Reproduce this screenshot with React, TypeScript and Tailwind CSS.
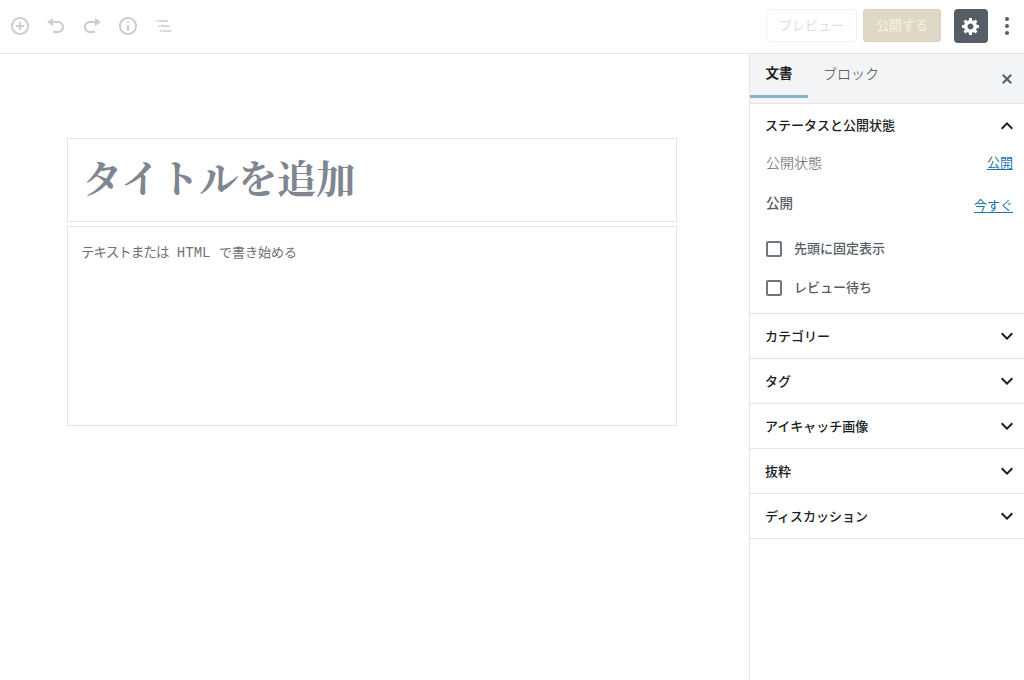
import type { ReactNode } from 'react'

const icons = {
  insert: 'M10 1c-5 0-9 4-9 9s4 9 9 9 9-4 9-9-4-9-9-9zm0 16c-3.9 0-7-3.1-7-7s3.1-7 7-7 7 3.1 7 7-3.1 7-7 7zm1-11H9v3H6v2h3v3h2v-3h3V9h-3V6z',
  undo: 'M12 5H7V2L1 6l6 4V7h5c2.2 0 4 1.8 4 4s-1.8 4-4 4H7v2h5c3.3 0 6-2.7 6-6s-2.7-6-6-6z',
  redo: 'M8 5h5V2l6 4-6 4V7H8c-2.2 0-4 1.8-4 4s1.8 4 4 4h5v2H8c-3.3 0-6-2.7-6-6s2.7-6 6-6z',
  info: 'M9 15h2V9H9v6zm1-10c-.5 0-1 .5-1 1s.5 1 1 1 1-.5 1-1-.5-1-1-1zm0-4c-5 0-9 4-9 9s4 9 9 9 9-4 9-9-4-9-9-9zm0 16c-3.9 0-7-3.1-7-7s3.1-7 7-7 7 3.1 7 7-3.1 7-7 7z',
  navigation: 'M5 5H3v2h2V5zm3 8h11v-2H8v2zm9-8H6v2h11V5zM7 11H5v2h2v-2zm0 8h2v-2H7v2zm3-2v2h11v-2H10z',
  settings: 'M18 12h-2.18c-.17.7-.44 1.35-.81 1.93l1.54 1.54-2.1 2.1-1.54-1.54c-.58.36-1.23.63-1.91.79V19H8v-2.18c-.68-.16-1.33-.43-1.91-.79l-1.54 1.54-2.12-2.12 1.54-1.54c-.36-.58-.63-1.23-.79-1.91H1V9.03h2.17c.16-.7.44-1.35.8-1.94L2.43 5.55l2.1-2.1 1.54 1.54c.58-.37 1.24-.64 1.93-.81V2h3v2.18c.68.16 1.33.43 1.91.79l1.54-1.54 2.12 2.12-1.54 1.54c.36.59.64 1.24.8 1.94H18V12zm-8.5 1.5c1.66 0 3-1.34 3-3s-1.34-3-3-3-3 1.34-3 3 1.34 3 3 3z',
  close: 'M14.95 6.46L11.41 10l3.54 3.54-1.41 1.41L10 11.42l-3.53 3.53-1.42-1.42L8.58 10 5.05 6.47l1.42-1.42L10 8.58l3.54-3.53z',
  down: 'M7.41 8.59L12 13.17l4.59-4.58L18 10l-6 6-6-6 1.41-1.41z',
  up: 'M12 8l-6 6 1.41 1.41L12 10.83l4.59 4.58L18 14z',
}

const panels = ['カテゴリー', 'タグ', 'アイキャッチ画像', '抜粋', 'ディスカッション']

function Icon({ name, box = 20, className = 'size-5' }: { name: keyof typeof icons; box?: number; className?: string }) {
  return (
    <svg viewBox={`0 0 ${box} ${box}`} fill="currentColor" className={`shrink-0 ${className}`} aria-hidden="true">
      <path d={icons[name]} />
    </svg>
  )
}

function Header() {
  return (
    <header className="flex h-[54px] shrink-0 items-center justify-between border-b border-[#e2e4e7] pb-0.5">
      <div className="flex gap-4 pl-2.5 text-[#cbcdcf]">
        <button aria-label="ブロックの追加"><Icon name="insert" /></button>
        <button aria-label="取り消し"><Icon name="undo" /></button>
        <button aria-label="やり直し"><Icon name="redo" /></button>
        <button aria-label="コンテンツ構造"><Icon name="info" /></button>
        <button aria-label="ブロックナビゲーション"><Icon name="navigation" box={24} /></button>
      </div>
      <div className="flex items-center pr-[7px] text-[13px]">
        <button className="h-[33px] w-[91px] rounded-[3px] border border-[#f3f3f4] pb-0.5 text-[#dddddf]">プレビュー</button>
        <button className="ml-1.5 h-[33px] w-[78px] rounded-[3px] border border-[#d9d1bc] bg-[#dfd8c6] pb-0.5 font-medium text-[#f5efdc]">公開する</button>
        <button aria-label="設定" className="ml-[13px] flex h-[34px] w-[34px] items-center justify-center rounded-[4px] bg-[#555d66] text-white">
          <Icon name="settings" />
        </button>
        <button aria-label="ツールと設定をさらに表示" className="ml-[9px] text-[#555d66]">
          <svg viewBox="0 0 20 20" fill="currentColor" className="size-5">
            <circle cx="10" cy="3" r="2" />
            <circle cx="10" cy="10" r="2" />
            <circle cx="10" cy="17" r="2" />
          </svg>
        </button>
      </div>
    </header>
  )
}

function Editor() {
  return (
    <main className="flex flex-1 flex-col pl-[67px] pr-[72px] pt-[84px]">
      <div className="flex h-[84px] items-center border border-[#e2e4e7] pl-[15px] pr-3.5 pb-[7px] font-['Noto_Serif_CJK_JP','Noto_Serif_JP','Noto_Sans_CJK_JP',serif] text-[39px] font-bold text-[#7f8690]">
        タイトルを追加
      </div>
      <div className="mt-1 h-[200px] whitespace-pre border border-[#e2e4e7] px-[13px] pt-[14px] font-['Liberation_Mono','Noto_Sans_CJK_JP',monospace] text-[13px] leading-6 text-[#6f7173]">
        <span className="text-[13.5px] tracking-[-0.95px]">テキストまたは</span>
        <span className="text-[14px]"> HTML </span>
        <span>で書き始める</span>
      </div>
    </main>
  )
}

function Check({ children }: { children: ReactNode }) {
  return (
    <label className="flex h-5 items-center gap-3">
      <span className="size-4 rounded-[2px] border-2 border-[#6c7781]" />
      <span className="pb-0.5 font-medium">{children}</span>
    </label>
  )
}

function Sidebar() {
  return (
    <aside className="flex w-[275px] shrink-0 flex-col border-l border-[#e2e4e7] text-[13px] text-[#555d66]">
      <div className="flex h-[50px] shrink-0 border-b border-[#e2e4e7] bg-[#f3f4f5] text-[#191e23]">
        <button className="h-11 w-[58px] border-b-3 border-[#8ab1ca] pb-1 text-[13.5px] font-bold">文書</button>
        <button className="h-11 px-[15px] pb-[6px] text-[14px] font-light text-[#3c4248]">ブロック</button>
        <button aria-label="設定を閉じる" className="ml-auto mr-[7px] text-[#555d66]"><Icon name="close" /></button>
      </div>
      <section className="h-[210px] shrink-0 border-b border-[#e2e4e7] pl-4 pr-[11px]">
        <div className="-ml-px flex h-[43px] items-center justify-between font-medium text-[#191e23]">
          <span className="pb-px">ステータスと公開状態</span>
          <Icon name="up" box={24} className="-mr-1.5 size-6" />
        </div>
        <div className="mt-px flex h-7 items-center justify-between">
          <span className="text-[14px] font-light">公開状態</span>
          <button className="text-[#1c74aa] underline underline-offset-2">公開</button>
        </div>
        <div className="mt-3 flex h-7 items-center justify-between">
          <span className="text-[13.5px] font-medium">公開</span>
          <button className="pt-1.5 text-[#1c74aa] underline underline-offset-2">今すぐ</button>
        </div>
        <div className="mt-[23px] flex flex-col gap-[19px]">
          <Check>先頭に固定表示</Check>
          <Check>レビュー待ち</Check>
        </div>
      </section>
      {panels.map(title => (
        <button key={title} className="flex h-[45px] shrink-0 items-center justify-between border-b border-[#e2e4e7] pl-[15px] pr-[5px] font-medium text-[#191e23]">
          <span className="pb-px">{title}</span>
          <Icon name="down" box={24} className="size-6" />
        </button>
      ))}
    </aside>
  )
}

export default function App() {
  return (
    <div className="flex h-[680px] w-[1024px] flex-col overflow-hidden bg-white font-['Noto_Sans_CJK_JP',sans-serif]">
      <Header />
      <div className="flex min-h-0 flex-1">
        <Editor />
        <Sidebar />
      </div>
    </div>
  )
}
